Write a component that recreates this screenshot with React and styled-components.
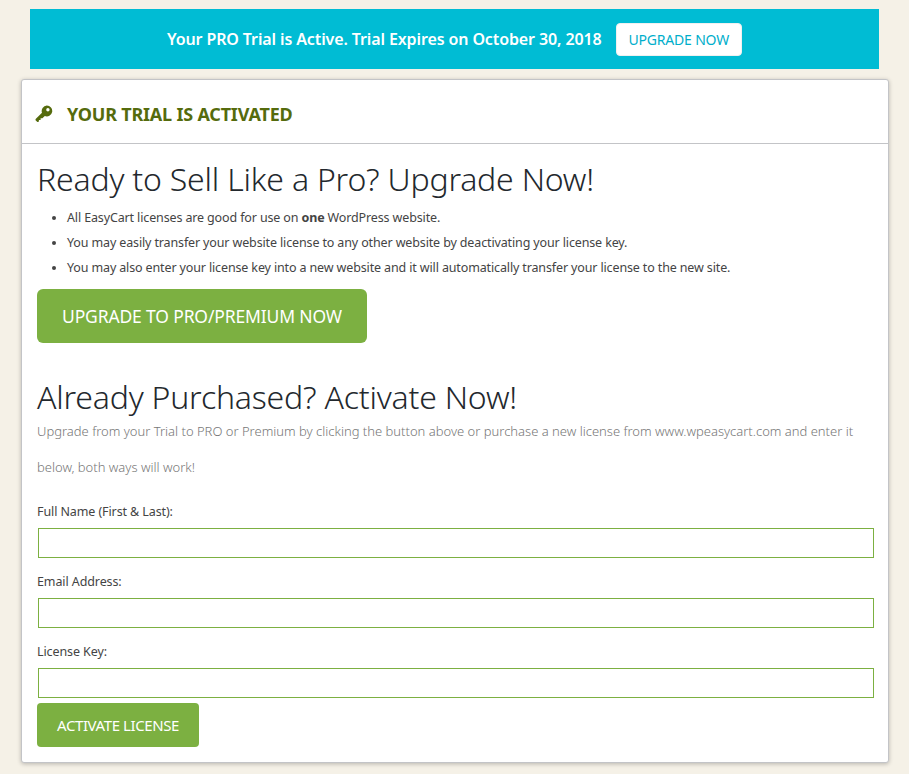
import React from 'react'
import styled, { createGlobalStyle } from 'styled-components'

const GlobalStyle = createGlobalStyle`
  html, body { margin: 0; padding: 0; }
  body {
    background: #f5f1e7;
    font-family: "Noto Sans", "Open Sans", sans-serif;
    color: #444;
  }
`

const Page = styled.div`
  padding: 9px 20px 11px 21px;
  height: 754px;
`

const Banner = styled.div`
  margin: 0 10px 10px 9px;
  height: 60px;
  background: #00bcd4;
  display: flex;
  align-items: center;
  justify-content: center;
  gap: 14px;
`

const BannerText = styled.span`
  color: #fff;
  font-size: 16px;
  font-weight: 600;
  letter-spacing: -0.115px;
`

const BannerButton = styled.a`
  background: #fff;
  border: 1px solid #f0f0f0;
  border-radius: 4px;
  color: #00aecb;
  font-size: 14px;
  height: 31px;
  line-height: 31px;
  padding: 0 12px;
  letter-spacing: -0.2px;
`

const Card = styled.div`
  background: #fff;
  border: 1px solid #c3c4c7;
  border-radius: 3px;
  box-shadow: 0 1px 4px rgba(0, 0, 0, 0.25);
  height: 684px;
  box-sizing: border-box;
`

const CardHeader = styled.div`
  height: 64px;
  box-sizing: border-box;
  padding-top: 4px;
  border-bottom: 1px solid #c3c4c7;
  display: flex;
  align-items: center;
  padding-left: 13px;
  gap: 14px;
`

const CardTitle = styled.h2`
  margin: 0;
  font-size: 18px;
  font-weight: 700;
  color: #556b0d;
  letter-spacing: -0.2px;
`

const CardBody = styled.div`
  padding: 14px 15px 0;
`

const Heading = styled.h1`
  margin: 0;
  font-size: 32px;
  font-weight: 300;
  line-height: 42px;
  color: #23282d;
  letter-spacing: -0.2px;
`

const Bullets = styled.ul`
  margin: 5px 0 0;
  padding: 0 0 0 30px;
  font-size: 12.5px;
  line-height: 25px;
  color: #444;
  letter-spacing: -0.135px;
`

const BigButton = styled.a`
  display: inline-block;
  margin-top: ${p => (p.$small ? '-10px' : '9px')};
  background: #7cb041;
  color: #fff;
  border-radius: ${p => (p.$small ? '4px' : '6px')};
  font-size: ${p => (p.$small ? '15px' : '17.5px')};
  height: ${p => (p.$small ? '44px' : '54px')};
  line-height: ${p => (p.$small ? '44px' : '54px')};
  padding: ${p => (p.$small ? '0 20px' : '0 25px')};
  letter-spacing: ${p => (p.$small ? '-0.4px' : '-0.15px')};
`

const SubHeading = styled(Heading)`
  margin-top: 35px;
  line-height: 38px;
`

const Intro = styled.p`
  margin: -3px 0 0;
  font-size: 13px;
  line-height: 36px;
  font-weight: 300;
  color: #777;
`

const Field = styled.div`
  display: flex;
  flex-direction: column;
  margin-top: ${p => (p.$first ? '18px' : '0')};
`

const Label = styled.label`
  font-size: 12.5px;
  line-height: 17px;
  margin-bottom: 8px;
  color: #444;
  letter-spacing: -0.1px;
`

const Input = styled.input`
  box-sizing: border-box;
  height: 30px;
  margin: 0 0 15px 1px;
  width: 836px;
  border: 1px solid #7cb041;
  background: #fff;
  outline: none;
`

const KeyIcon = () => (
  <svg width="18" height="18" viewBox="0 0 18 18">
    <path
      fill="#556b0d"
      fillRule="evenodd"
      d="M11.8.6a5.4 5.4 0 1 1-2 10.4L7.4 13.3H5.6v1.8H3.9v1.5c-.4.5-1.2.6-1.8.2l-1.3-1.3c-.5-.5-.4-1.3.1-1.8l6.1-5.9A5.4 5.4 0 0 1 11.8.6zm1.1 2.4a1.7 1.7 0 1 0 0 3.4 1.7 1.7 0 0 0 0-3.4z"
    />
  </svg>
)

const fields = ['Full Name (First & Last):', 'Email Address:', 'License Key:']

const App = () => {
  return (
    <>
      <GlobalStyle />
      <Page>
        <Banner>
          <BannerText>Your PRO Trial is Active. Trial Expires on October 30, 2018</BannerText>
          <BannerButton>UPGRADE NOW</BannerButton>
        </Banner>
        <Card>
          <CardHeader>
            <KeyIcon />
            <CardTitle>YOUR TRIAL IS ACTIVATED</CardTitle>
          </CardHeader>
          <CardBody>
            <Heading>Ready to Sell Like a Pro? Upgrade Now!</Heading>
            <Bullets>
              <li>All EasyCart licenses are good for use on <b>one</b> WordPress website.</li>
              <li>You may easily transfer your website license to any other website by deactivating your license key.</li>
              <li>You may also enter your license key into a new website and it will automatically transfer your license to the new site.</li>
            </Bullets>
            <BigButton>UPGRADE TO PRO/PREMIUM NOW</BigButton>
            <SubHeading>Already Purchased? Activate Now!</SubHeading>
            <Intro>
              Upgrade from your Trial to PRO or Premium by clicking the button above or purchase a new license from www.wpeasycart.com and enter it below, both ways will work!
            </Intro>
            {fields.map((f, i) => (
              <Field key={f} $first={i === 0}>
                <Label>{f}</Label>
                <Input type="text" />
              </Field>
            ))}
            <BigButton $small>ACTIVATE LICENSE</BigButton>
          </CardBody>
        </Card>
      </Page>
    </>
  )
}

export default App
